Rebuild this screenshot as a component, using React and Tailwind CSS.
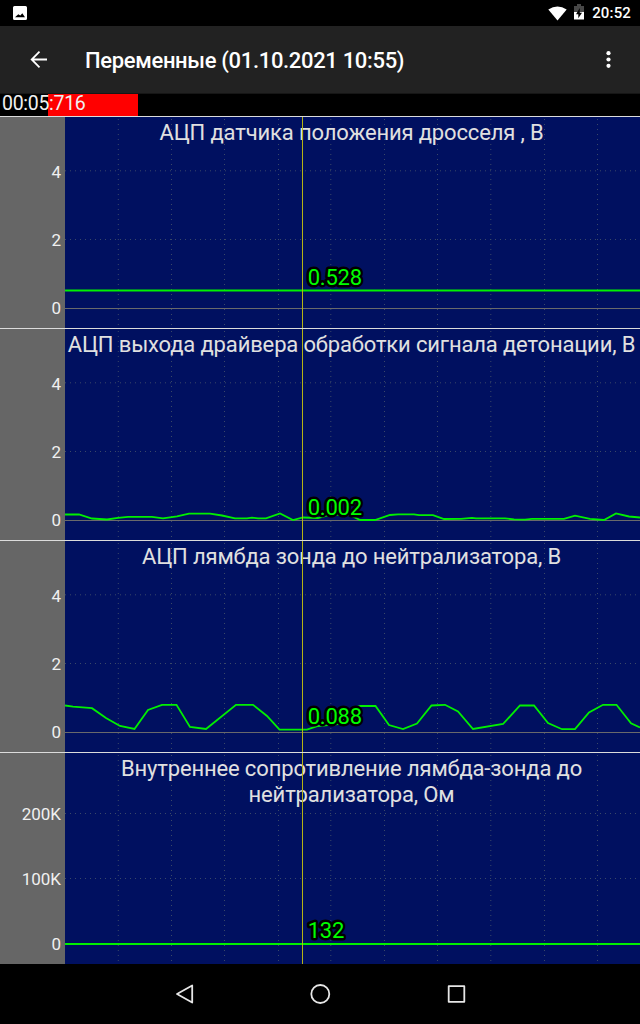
const gridX = [117.8, 171, 224, 278, 330.3, 384, 437, 490.3, 544, 597];
const cursorX = 302;

const charts = [
  {
    title: "АЦП датчика положения дросселя , В",
    ticks: ["4", "2", "0"],
    gridY: [54.3, 123],
    value: "0.528",
    valueY: 169,
    line: "65,174.5 640,174.5",
    tall: false,
  },
  {
    title: "АЦП выхода драйвера обработки сигнала детонации, В",
    ticks: ["4", "2", "0"],
    gridY: [54.3, 123],
    value: "0.002",
    valueY: 187,
    line: "65,186.5 79,186.5 92,190.5 107,191.5 118,189.8 128,188.8 152,188.8 163,190.3 177,188.3 189,185.6 210,185.6 222,187.5 235,190.4 247,190.4 252,189.6 258,190.4 266,190.3 280,185.4 293,192 303,189.5 318,190 331,186.5 350,187 360,192 375,192 390,187 398,186.3 414,186.3 419,187.2 433,187.2 444,191 461,190.8 472,189.8 476,190.4 505,190.4 514,191.4 525,191.6 532,190.8 564,190.8 575,187.7 590,190.8 604,192 616,185.4 629,188.5 640,189.5",
    tall: false,
  },
  {
    title: "АЦП лямбда зонда до нейтрализатора, В",
    ticks: ["4", "2", "0"],
    gridY: [54.3, 123],
    value: "0.088",
    valueY: 184,
    line: "65,165.5 73,166.7 92,168.2 106,178 120,186 134.5,189 148,170 162,164.8 176.5,164.8 190,187 206,189 236,164.8 253,164.8 267,176 279.5,189.6 307,189.6 318,186 340,184 350,170 360,166 375.5,166 389,185 403,189 417,183.5 431.5,165.5 445,164.8 458,171.5 473,189 503,184 520,165.5 534,165.5 548,183 562,189.2 575,189.2 589,172.5 603,164.8 616.5,164.8 631,183.3 640,187.5",
    tall: false,
  },
  {
    title: "Внутреннее сопротивление лямбда-зонда до нейтрализатора, Ом",
    ticks: ["200K", "100K", "0"],
    gridY: [61, 126],
    value: "132",
    valueY: 186,
    line: "65,192 640,192",
    tall: true,
  },
];

function StatusBar() {
  return (
    <div className="flex h-[26px] items-center bg-black pl-[13px] pr-[9px] text-white">
      <svg width="14" height="14" viewBox="0 0 14 14">
        <path fillRule="evenodd" fill="#fff" d="M1.500 0h11Q14 0 14 1.500v11q0 1.500-1.500 1.500h-11Q0 14 0 12.500v-11Q0 0 1.500 0zM2 11.300h10L9.300 7.300 7.300 9.500 5.300 8.200z" />
      </svg>
      <svg className="ml-auto" width="19" height="15" viewBox="0 0 19 15">
        <path fill="#fff" d="M9.500 14.500 0.300 3.400Q9.500-2.400 18.700 3.400z" />
      </svg>
      <svg className="mb-[2px] ml-[7px]" width="10" height="16" viewBox="0 0 10 16">
        <path fill="#484848" d="M3 0h4v2h3v6H0V2h3z" />
        <path fill="#fff" d="M0 8h10v7.500H0z" />
        <path fill="#000" d="M5.800 4 2 10.300h2.300v4L8 8.800H5.800z" />
      </svg>
      <span className="ml-[8px] text-[15px] font-medium leading-none tracking-[0.01em]">20:52</span>
    </div>
  );
}

function AppBar() {
  return (
    <div className="flex h-[68px] items-center border-b border-[#161616] bg-[#222222] pt-px pl-[30px] pr-[29px] text-white">
      <svg width="18" height="18" viewBox="0 0 18 18" fill="none" stroke="#fff" strokeWidth="1.800">
        <path d="M17 8.500H2M9.500 0.700 1.700 8.500l7.800 7.800" />
      </svg>
      <h1 className="ml-[37px] pt-[2px] text-[22px] font-medium leading-none tracking-[-0.33px]">
        Переменные (01.10.2021 10:55)
      </h1>
      <svg className="ml-auto" width="5" height="18" viewBox="0 0 5 18" fill="#fff">
        <circle cx="2.500" cy="2.200" r="2.100" />
        <circle cx="2.500" cy="8.500" r="2.100" />
        <circle cx="2.500" cy="14.800" r="2.100" />
      </svg>
    </div>
  );
}

function TimeBar() {
  return (
    <div className="relative flex h-[22px] bg-black pl-[48px]">
      <div className="w-[90px] bg-[#ff0000]" />
      <span className="absolute left-[2px] top-0 text-[19.5px] leading-[20px] tracking-[-0.3px] text-[#f0f0f0]">
        00:05:716
      </span>
    </div>
  );
}

function Chart({ chart }) {
  return (
    <section className="flex h-[212px] border-t border-[#dcdcdc]">
      <div
        className={`flex w-[65px] flex-col bg-[#666666] pr-[4px] text-right text-[17px] text-[#f0f0f0] ${
          chart.tall ? "pt-[29px]" : "pt-[21px]"
        }`}
      >
        {chart.ticks.map((t) => (
          <span key={t} className={chart.tall ? "h-[65px] leading-[65px]" : "h-[68px] leading-[68px]"}>
            {t}
          </span>
        ))}
      </div>
      <div className="relative w-[575px] bg-[#001060]">
        {/* grid sits under the title, trace and cursor over it */}
        <svg className="absolute inset-0" width="575" height="211" viewBox="65 1 575 211">
          <g stroke="#3a4868" strokeWidth="1" strokeDasharray="1 4">
            {gridX.map((x) => (
              <path key={x} d={`M${x + 0.5} 3V212`} />
            ))}
            {chart.gridY.map((y) => (
              <path key={y} d={`M65 ${y + 0.5}H640`} />
            ))}
          </g>
          <path d="M65 192.500H640" stroke="#69696b" />
        </svg>
        <h2 className="relative pr-[2px] pt-[3px] text-center text-[22px] leading-[26px] tracking-[-0.15px] text-[#e0e0e0]">
          {chart.title}
        </h2>
        <svg className="absolute inset-0" width="575" height="211" viewBox="65 1 575 211">
          <polyline
            points={chart.line}
            fill="none"
            stroke="#00f000"
            strokeWidth={chart.tall ? 2 : 1.8}
          />
          <path d={`M${cursorX + 0.5} 0V212`} stroke="#b4b414" />
          <text
            x="307.700"
            y={chart.valueY}
            fontSize="22"
            letterSpacing="-0.200"
            fill="#00ff00"
            stroke="#000"
            strokeWidth="5"
            strokeLinejoin="round"
            paintOrder="stroke"
          >
            {chart.value}
          </text>
        </svg>
      </div>
    </section>
  );
}

function NavBar() {
  return (
    <div className="flex h-[60px] items-center justify-center bg-black">
      <svg width="300" height="24" viewBox="170 982 300 24" fill="none" stroke="#e6e6e6" strokeWidth="1.800" strokeLinejoin="round">
        <path d="M192.200 985.500v17L177 994z" />
        <circle cx="320.300" cy="994" r="9" />
        <rect x="448.700" y="986.200" width="15.600" height="15.600" />
      </svg>
    </div>
  );
}

export default function App() {
  return (
    <div className="h-[1024px] w-[640px] overflow-hidden bg-black font-['Roboto',sans-serif]">
      <StatusBar />
      <AppBar />
      <TimeBar />
      {charts.map((c) => (
        <Chart key={c.title} chart={c} />
      ))}
      <NavBar />
    </div>
  );
}
